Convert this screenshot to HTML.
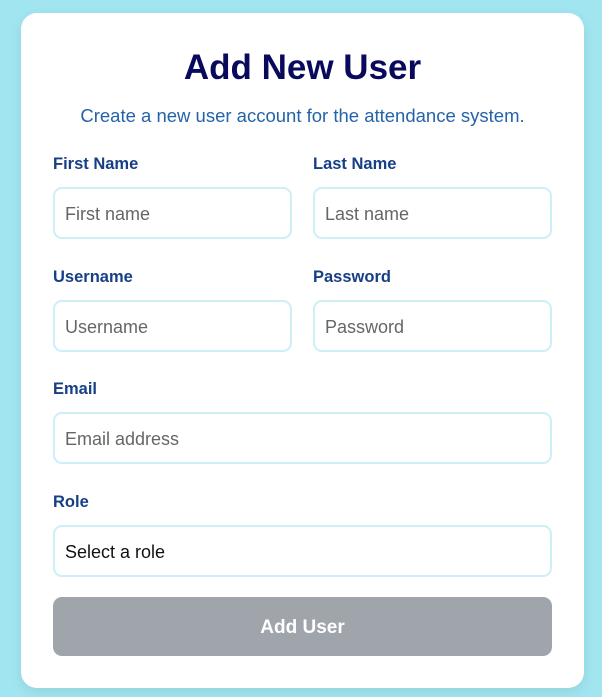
<!DOCTYPE html>
<html><head><style>
*{box-sizing:border-box;margin:0;padding:0}
body{width:602px;height:697px;background:#a0e5f0;font-family:"Liberation Sans",sans-serif;position:relative;overflow:hidden}
.card{position:absolute;left:21px;top:13px;width:563px;height:675px;background:#fff;border-radius:16px;box-shadow:0 4px 12px rgba(0,0,0,0.08)}
h1{position:absolute;top:35px;left:0;width:100%;text-align:center;font-size:35px;font-weight:bold;color:#0a0a5c}
.sub{position:absolute;top:92px;left:0;width:100%;text-align:center;font-size:18.5px;color:#2563a8;font-weight:300}
.lbl{position:absolute;font-size:16.5px;font-weight:bold;color:#173f85}
.in{position:absolute;height:52px;border:2px solid #cdeff7;border-radius:9px;font-size:18px;color:#666;padding-left:10px;line-height:51px}
.btn{position:absolute;left:32px;top:584px;width:499px;height:59px;background:#a0a5ac;border-radius:9px;color:#fff;font-weight:bold;font-size:19px;text-align:center;line-height:62px}
</style></head><body>
<div class="card">
<h1>Add New User</h1>
<div class="sub">Create a new user account for the attendance system.</div>
<div class="lbl" style="left:32px;top:142px">First Name</div>
<div class="lbl" style="left:292px;top:142px">Last Name</div>
<div class="in" style="left:32px;top:174px;width:239px">First name</div>
<div class="in" style="left:292px;top:174px;width:239px">Last name</div>
<div class="lbl" style="left:32px;top:255px">Username</div>
<div class="lbl" style="left:292px;top:255px">Password</div>
<div class="in" style="left:32px;top:287px;width:239px">Username</div>
<div class="in" style="left:292px;top:287px;width:239px">Password</div>
<div class="lbl" style="left:32px;top:367px">Email</div>
<div class="in" style="left:32px;top:399px;width:499px">Email address</div>
<div class="lbl" style="left:32px;top:480px">Role</div>
<div class="in" style="left:32px;top:512px;width:499px;color:#111">Select a role</div>
<div class="btn">Add User</div>
</div>
</body></html>
